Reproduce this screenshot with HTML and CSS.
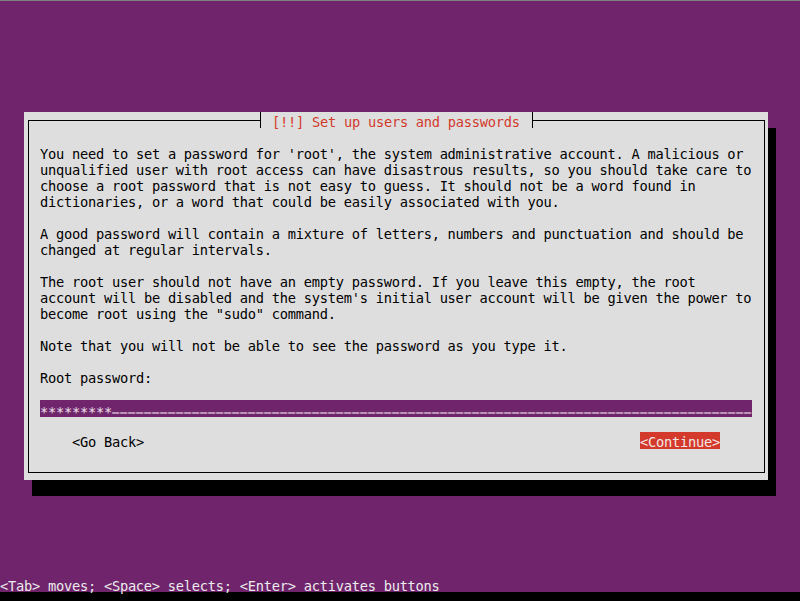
FILE: index.html
```html
<!DOCTYPE html>
<html>
<head>
<meta charset="utf-8">
<link rel="stylesheet" href="styles.css">
</head>
<body>
<div class="screen">
  <div class="panel">
    <div class="titlebar">
      <div class="edge edge-left"></div>
      <div class="title">[!!] Set up users and passwords</div>
      <div class="edge edge-right"></div>
    </div>
    <div class="frame">
      <p class="para">You need to set a password for 'root', the system administrative account. A malicious or<br>unqualified user with root access can have disastrous results, so you should take care to<br>choose a root password that is not easy to guess. It should not be a word found in<br>dictionaries, or a word that could be easily associated with you.</p>
      <p class="para">A good password will contain a mixture of letters, numbers and punctuation and should be<br>changed at regular intervals.</p>
      <p class="para">The root user should not have an empty password. If you leave this empty, the root<br>account will be disabled and the system's initial user account will be given the power to<br>become root using the "sudo" command.</p>
      <p class="para">Note that you will not be able to see the password as you type it.</p>
      <p class="label">Root password:</p>
      <div class="field"><span class="stars">*********</span><span class="blanks">________________________________________________________________________________</span></div>
      <div class="buttons">
        <span class="btn">&lt;Go Back&gt;</span>
        <span class="btn btn-active">&lt;Continue&gt;</span>
      </div>
    </div>
  </div>
  <div class="status">&lt;Tab&gt; moves; &lt;Space&gt; selects; &lt;Enter&gt; activates buttons</div>
</div>
</body>
</html>
```

FILE: styles.css
```css
html, body {
  margin: 0;
  padding: 0;
}
body {
  background: #000;
  width: 800px;
  height: 601px;
  overflow: hidden;
  font-family: "DejaVu Sans Mono", "Liberation Mono", monospace;
  font-size: 13.7px;
  letter-spacing: -0.248px;
  line-height: 16px;
  color: #000;
}
.screen {
  height: 592px;
  background: #6f246c;
  box-shadow: inset 0 1px 0 #808080;
  display: flex;
  flex-direction: column;
  padding: 112px 0 0 24px;
  box-sizing: border-box;
}
.panel {
  width: 744px;
  height: 368px;
  background: #dedede;
  box-shadow: 8px 16px 0 #000;
  padding: 0 3px 7px 4px;
  box-sizing: border-box;
  display: flex;
  flex-direction: column;
}
.titlebar {
  height: 16px;
  display: flex;
}
.edge {
  width: 232px;
  margin-top: 8px;
  border-top: 1px solid #000;
  box-sizing: border-box;
}
.edge-left {
  border-left: 1px solid #000;
}
.edge-right {
  border-right: 1px solid #000;
}
.title {
  width: 273px;
  height: 16px;
  box-sizing: border-box;
  border-left: 1px solid #000;
  border-right: 1px solid #000;
  padding: 2px 0 0 11px;
  color: #d33a2c;
  white-space: pre;
}
.frame {
  flex: 1;
  border: 1px solid #000;
  border-top: none;
  padding: 18px 12px 0 11px;
  display: flex;
  flex-direction: column;
}
.para {
  margin: 0 0 16px 0;
  white-space: nowrap;
}
.label {
  margin: 0;
  white-space: nowrap;
}
.field {
  margin-top: 14px;
  height: 17px;
  background: #6f246c;
  color: #ece2ea;
  white-space: pre;
  display: flex;
  align-items: flex-start;
}
.stars {
  display: block;
  padding-top: 4px;
}
.blanks {
  display: block;
  margin-top: -2px;
  font-size: 12px;
  letter-spacing: 0.775px;
  text-shadow: 0 1px 0 #ece2ea;
}
.buttons {
  margin-top: 15px;
  padding: 0 32px;
  display: flex;
  justify-content: space-between;
}
.btn {
  display: block;
  height: 17px;
  padding-top: 2px;
  box-sizing: border-box;
  white-space: pre;
}
.btn-active {
  background: #d33a2c;
  color: #f4e6e4;
}
.status {
  margin-top: auto;
  margin-left: -24px;
  height: 16px;
  box-sizing: border-box;
  padding-top: 2px;
  color: #ececec;
  white-space: pre;
}
```
